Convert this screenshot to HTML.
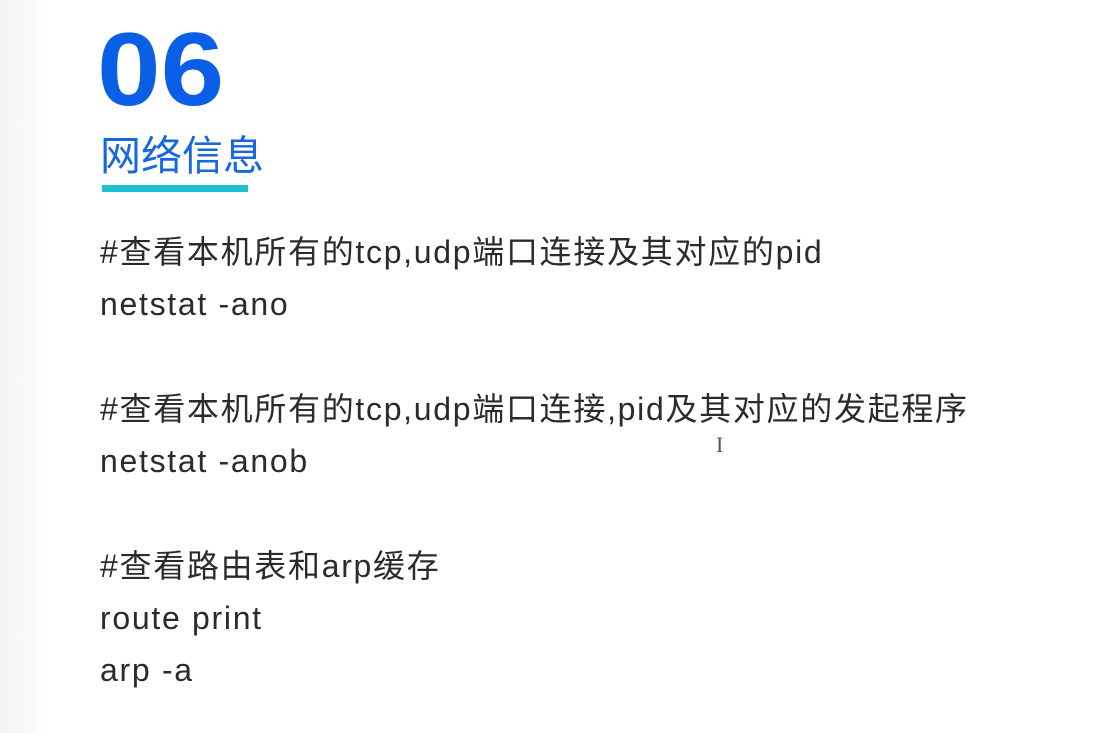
<!DOCTYPE html>
<html><head><meta charset="utf-8"><style>
html,body{margin:0;padding:0;width:1099px;height:733px;overflow:hidden;background:#fff;}
body{position:relative;font-family:"Liberation Sans","Noto Sans CJK SC",sans-serif;}
.strip{position:absolute;left:0;top:0;width:44px;height:733px;background:linear-gradient(90deg,#f3f3f3,#fafafa 70%,#fff);}
.num{position:absolute;left:97px;top:8px;font-size:104px;font-weight:bold;color:#0a5fe6;line-height:1.2;letter-spacing:0px;transform:scaleX(1.1);transform-origin:left top;}
.h{position:absolute;left:100px;top:128px;font-size:41px;color:#1767e0;line-height:1.2;font-family:"Noto Sans CJK SC",sans-serif;}
.bar{position:absolute;left:102px;top:185px;width:146px;height:7px;background:#1fc0cf;}
.l{position:absolute;left:100px;font-size:32px;letter-spacing:1.7px;color:#2b2b2b;line-height:1;white-space:nowrap;}
</style></head><body>
<div class="strip"></div>
<div class="num">06</div>
<div class="h">网络信息</div>
<div class="bar"></div>
<div class="l" style="top:236px">#查看本机所有的tcp,udp端口连接及其对应的pid</div>
<div class="l" style="top:288px">netstat -ano</div>
<div class="l" style="top:393px">#查看本机所有的tcp,udp端口连接,pid及其对应的发起程序</div>
<div class="l" style="top:445px">netstat -anob</div>
<div class="l" style="top:550px">#查看路由表和arp缓存</div>
<div class="l" style="top:602px">route print</div>
<div class="l" style="top:654px">arp -a</div>
<div style="position:absolute;left:716px;top:432px;font-size:22px;color:#555;font-family:'Liberation Serif',serif">I</div>
</body></html>
